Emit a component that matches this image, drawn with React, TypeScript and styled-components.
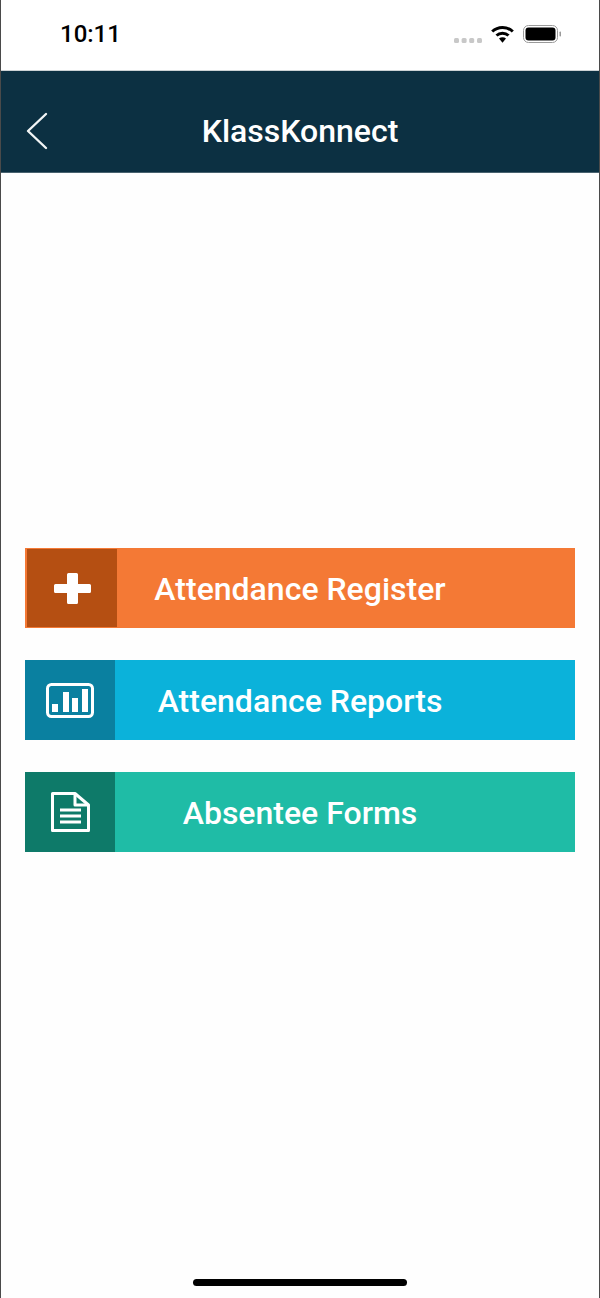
import React from 'react';
import styled, { createGlobalStyle } from 'styled-components';

const GlobalStyle = createGlobalStyle`
  html, body {
    margin: 0;
    padding: 0;
    background: #fff;
  }
`;

const Screen = styled.div`
  width: 600px;
  height: 1298px;
  box-sizing: border-box;
  border-left: 1px solid #4a4a4a;
  border-right: 1px solid #4a4a4a;
  background: #fefefe;
  display: flex;
  flex-direction: column;
  font-family: Roboto, 'Liberation Sans', sans-serif;
  overflow: hidden;
`;

const StatusBar = styled.div`
  height: 71px;
  flex: none;
  box-sizing: border-box;
  padding: 17px 37px 0 59px;
  background: #fff;
  border-bottom: 1px solid #ccd2d5;
  display: flex;
  justify-content: space-between;
  align-items: flex-start;
`;

const Clock = styled.span`
  font-size: 24px;
  line-height: 34px;
  font-weight: 500;
  color: #000;
`;

const StatusIcons = styled.div`
  display: flex;
  align-items: center;
  gap: 9px;
  height: 34px;
`;

const NavBar = styled.header`
  height: 102px;
  flex: none;
  box-sizing: border-box;
  padding-top: 18px;
  background: #0c3042;
  border-bottom: 1px solid #48626f;
  display: grid;
  grid-template-columns: 80px 1fr 80px;
  align-items: center;
`;

const BackButton = styled.div`
  padding-left: 25px;
  display: flex;
  align-items: center;
`;

const Title = styled.h1`
  margin: 0;
  text-align: center;
  color: #fff;
  font-size: 32px;
  font-weight: 500;
`;

const Menu = styled.main`
  flex: 1;
  padding: 375px 24px 0;
  display: flex;
  flex-direction: column;
  gap: 32px;
`;

const MenuItem = styled.div<{ $bg: string; $iconW: number }>`
  height: 80px;
  background: ${(p) => p.$bg};
  display: grid;
  grid-template-columns: ${(p) => p.$iconW}px 1fr ${(p) => p.$iconW}px;
  align-items: stretch;
`;

const IconBox = styled.div<{ $bg: string; $inset?: boolean }>`
  background: ${(p) => p.$bg};
  margin: ${(p) => (p.$inset ? '1px 0 1px 2px' : '0')};
  display: flex;
  align-items: center;
  justify-content: center;
`;

const Label = styled.span`
  align-self: center;
  padding-top: 2px;
  text-align: center;
  color: #fff;
  font-size: 32px;
  font-weight: 500;
  white-space: nowrap;
`;

const HomeBar = styled.div`
  width: 214px;
  height: 7px;
  flex: none;
  margin: 0 auto 12px;
  border-radius: 4px;
  background: #000;
`;

const App: React.FC = () => {
  return (
    <>
      <GlobalStyle />
      <Screen>
        <StatusBar>
          <Clock>10:11</Clock>
          <StatusIcons>
            <svg width="28" height="18" viewBox="0 0 28 18">
              <g fill="#c8c8c8">
                <rect x="0" y="13" width="5" height="5" rx="1.5" />
                <rect x="7.6" y="13" width="5" height="5" rx="1.5" />
                <rect x="15.2" y="13" width="5" height="5" rx="1.5" />
                <rect x="23" y="13" width="5" height="5" rx="1.5" />
              </g>
            </svg>
            <svg width="23" height="18" viewBox="0 0 23 18">
              <g fill="none" stroke="#000" strokeWidth="3">
                <path d="M1.2 6.5 C7 1 16 1 21.8 6.5" />
                <path d="M5.5 10.5 C8.8 7.5 14.2 7.5 17.5 10.5" />
              </g>
              <path d="M8 13.5 C10 11.8 13 11.8 15 13.5 L11.5 17.8 Z" fill="#000" />
            </svg>
            <svg width="39" height="18" viewBox="0 0 39 18">
              <rect x="0.5" y="0.5" width="34" height="17" rx="5" fill="none" stroke="#9a9a9a" />
              <rect x="2.5" y="2.5" width="30" height="13" rx="3" fill="#000" />
              <rect x="36.5" y="6.5" width="1.5" height="5" rx="0.7" fill="#9a9a9a" />
            </svg>
          </StatusIcons>
        </StatusBar>

        <NavBar>
          <BackButton>
            <svg width="22" height="38" viewBox="0 0 22 38">
              <path d="M20 2 L2 19 L20 36" fill="none" stroke="#f2f5f6" strokeWidth="2.4" strokeLinecap="round" strokeLinejoin="round" />
            </svg>
          </BackButton>
          <Title>KlassKonnect</Title>
        </NavBar>

        <Menu>
          <MenuItem $bg="#f47935" $iconW={92}>
            <IconBox $bg="#b54f12" $inset>
              <svg width="37" height="32" viewBox="3 0 37 32">
                <path d="M17.5 1 h8 a1.5 1.5 0 0 1 1.5 1.5 v9.5 h11.5 a1.5 1.5 0 0 1 1.5 1.5 v6 a1.5 1.5 0 0 1 -1.5 1.5 h-11.5 v9.5 a1.5 1.5 0 0 1 -1.5 1.5 h-8 a1.5 1.5 0 0 1 -1.5 -1.5 v-9.5 h-11.5 a1.5 1.5 0 0 1 -1.5 -1.5 v-6 a1.5 1.5 0 0 1 1.5 -1.5 h11.5 v-9.5 a1.5 1.5 0 0 1 1.5 -1.5 z" fill="#fff" />
              </svg>
            </IconBox>
            <Label>Attendance Register</Label>
          </MenuItem>
          <MenuItem $bg="#0bb2da" $iconW={90}>
            <IconBox $bg="#0a80a0">
              <svg width="48" height="35" viewBox="0 0 48 35">
                <rect x="1.5" y="1.5" width="45" height="32" rx="4" fill="none" stroke="#fff" strokeWidth="3" />
                <g fill="#fff">
                  <rect x="6" y="21" width="6" height="8" />
                  <rect x="17" y="9" width="6" height="20" />
                  <rect x="26" y="15" width="6" height="14" />
                  <rect x="36" y="6" width="6" height="23" />
                </g>
              </svg>
            </IconBox>
            <Label>Attendance Reports</Label>
          </MenuItem>
          <MenuItem $bg="#1fbca6" $iconW={90}>
            <IconBox $bg="#0e7a69">
              <svg width="40" height="40" viewBox="0 0 40 40">
                <g fill="none" stroke="#fff" strokeWidth="3" strokeLinejoin="round">
                  <path d="M2.5 1.5 H25 L38.5 13 V38.5 H2.5 Z" />
                  <path d="M25 1.5 V13 H38.5" />
                  <path d="M10 18 H31 M10 24 H31 M10 30 H31" />
                </g>
              </svg>
            </IconBox>
            <Label>Absentee Forms</Label>
          </MenuItem>
        </Menu>

        <HomeBar />
      </Screen>
    </>
  );
};

export default App;
